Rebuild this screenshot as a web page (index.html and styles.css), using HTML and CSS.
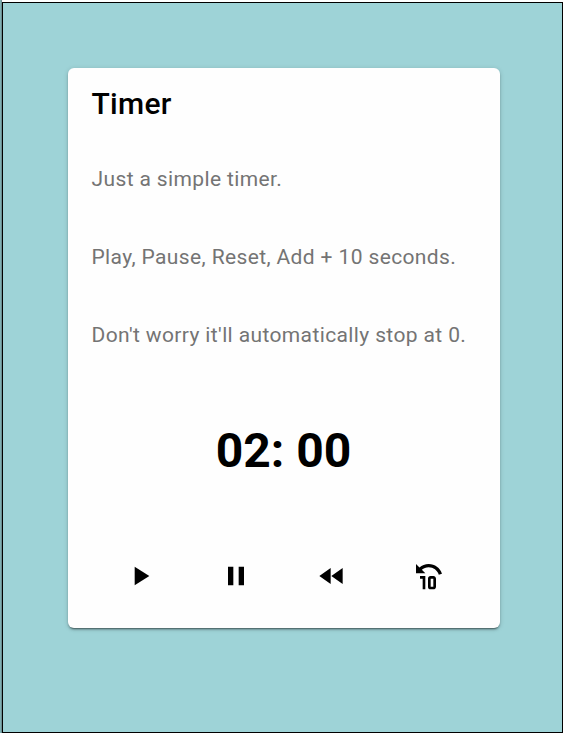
FILE: index.html
```html
<!DOCTYPE html>
<html lang="en">
<head>
<meta charset="utf-8">
<title>Timer</title>
<link rel="stylesheet" href="styles.css">
</head>
<body>
<main class="stage">
  <section class="card">
    <h1 class="title">Timer</h1>
    <div class="description">
      <p>Just a simple timer.</p>
      <p>Play, Pause, Reset, Add + 10 seconds.</p>
      <p>Don't worry it'll automatically stop at 0.</p>
    </div>
    <div class="time">02: 00</div>
    <div class="controls">
      <button class="control" aria-label="Play"><svg viewBox="0 0 24 24"><path d="M8 5v14l11-7z"/></svg></button>
      <button class="control" aria-label="Pause"><svg viewBox="0 0 24 24"><path d="M6 19h4V5H6v14zm8-14v14h4V5h-4z"/></svg></button>
      <button class="control" aria-label="Reset"><svg viewBox="0 0 24 24"><path d="M11 18V6l-8.5 6 8.5 6zm.5-6l8.5 6V6l-8.5 6z"/></svg></button>
      <button class="control" aria-label="Add 10 seconds"><svg viewBox="0 0 24 24"><path d="M12.5,3C17.15,3 21.08,6.03 22.47,10.22L20.1,11C19.05,7.81 16.04,5.5 12.5,5.5C10.54,5.5 8.77,6.22 7.38,7.38L10,10H3V3L5.6,5.6C7.45,4 9.85,3 12.5,3M10,12V22H8V14H6V12H10M18,14V20C18,21.11 17.11,22 16,22H14A2,2 0 0,1 12,20V14A2,2 0 0,1 14,12H16C17.11,12 18,12.9 18,14M14,14V20H16V14H14Z"/></svg></button>
    </div>
  </section>
</main>
</body>
</html>
```
FILE: styles.css
```css
* { box-sizing: border-box; }

body {
  margin: 0;
  height: 733px;
  padding: 2px 2px 0;
  background: linear-gradient(to right, #7fb0b4 1px, #6e8f92 1px, #6e8f92 2px, #fff 2px);
  font-family: Roboto, sans-serif;
  overflow: hidden;
}

.stage {
  width: 561px;
  height: 731px;
  padding: 65px;
  border: 1px solid #000;
  background: #9ed3d7;
}

.card {
  display: flex;
  flex-direction: column;
  width: 432px;
  height: 560px;
  padding: 16px 24.5px 16px 23.5px;
  border-radius: 6px;
  background: #fefefe;
  box-shadow: 0 3px 1px -2px rgba(0, 0, 0, .3), 0 2px 2px rgba(0, 0, 0, .2), 0 1px 5px rgba(0, 0, 0, .16);
}

.title {
  margin: 0;
  font-size: 30px;
  font-weight: 500;
  line-height: 40px;
  letter-spacing: .3px;
}

.description {
  display: flex;
  flex-direction: column;
  gap: 48px;
  margin-top: 40px;
  color: #747474;
  font-size: 21px;
  line-height: 30px;
  letter-spacing: .375px;
}

.description p { margin: 0; white-space: nowrap; }

.time {
  margin-top: 73px;
  font-size: 48px;
  font-weight: 700;
  line-height: 56px;
  text-align: center;
}

.controls {
  display: grid;
  grid-template-columns: repeat(4, 1fr);
  margin-top: 65px;
}

.control {
  display: flex;
  justify-content: center;
  align-items: center;
  height: 64px;
  padding: 0;
  border: 0;
  background: none;
}

.control svg { width: 32px; height: 32px; fill: #000; }
```
